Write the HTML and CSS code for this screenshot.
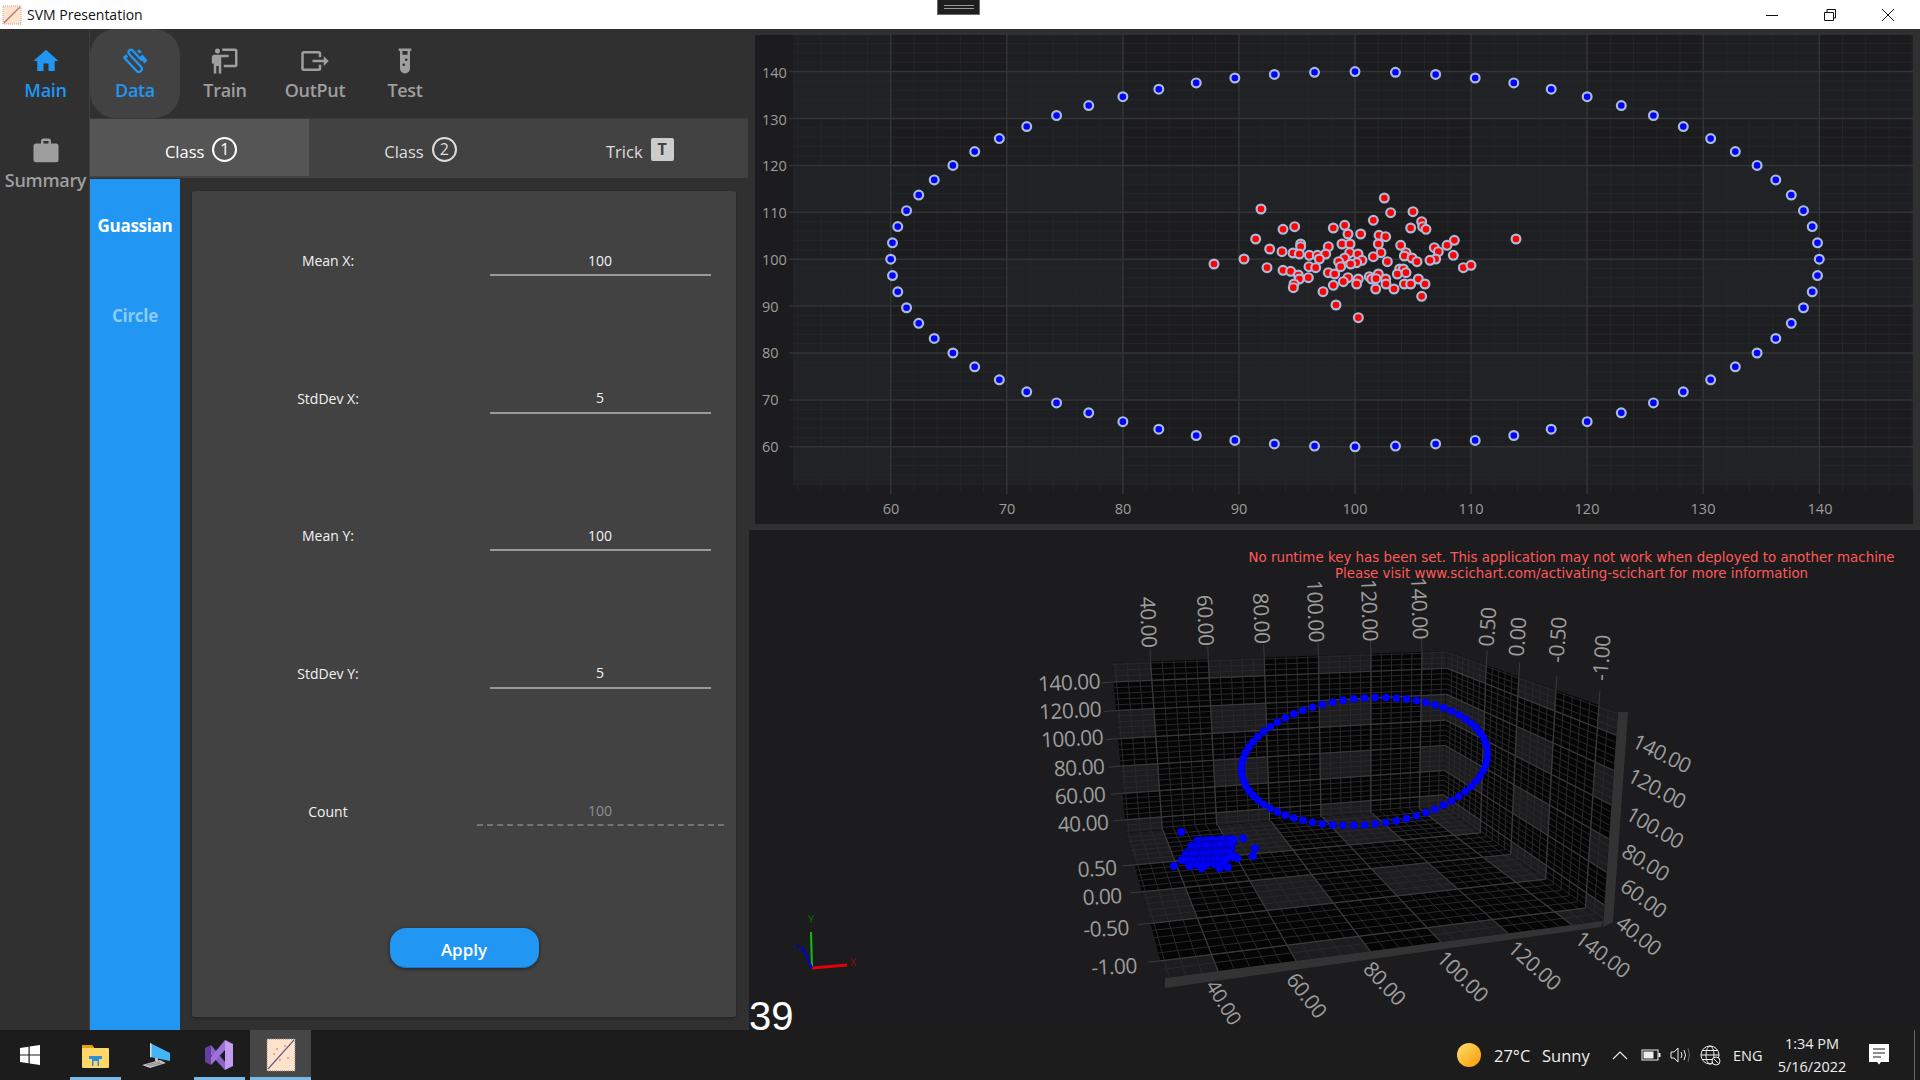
FILE: index.html
```html
<!DOCTYPE html>
<html lang="en">
<head>
<meta charset="utf-8">
<title>SVM Presentation</title>
<link rel="stylesheet" href="styles.css">
</head>
<body>
<div class="window">
  <header class="titlebar">
    <svg class="app-icon" viewBox="0 0 20 20"><rect x="1" y="1" width="18" height="18" fill="#fde3cc" stroke="#aaa" stroke-dasharray="1 1"/><path d="M2 18L18 2" stroke="#c9806a" stroke-width="1.2"/><path d="M2 17L17 3" stroke="#8a7a90" stroke-width=".6"/></svg>
    <span class="title-text">SVM Presentation</span>
    <div class="handle"><i></i><i></i></div>
    <div class="win-btns">
      <svg width="14" height="14" viewBox="0 0 14 14"><path d="M1 7.5H13" stroke="#111" stroke-width="1"/></svg>
      <svg width="14" height="14" viewBox="0 0 14 14"><path d="M1.5 4.5H10.5V12.5H1.5ZM4 4.5V1.5H12.5V10H10.5" fill="none" stroke="#111" stroke-width="1"/></svg>
      <svg width="14" height="14" viewBox="0 0 14 14"><path d="M1 1L13 13M13 1L1 13" stroke="#111" stroke-width="1"/></svg>
    </div>
  </header>

  <div class="main">
    <section class="left">
      <nav class="rail">
        <div class="nav-item is-active">
          <svg class="nav-icon" viewBox="0 0 24 24"><path d="M10,20V14H14V20H19V12H22L12,3L2,12H5V20H10Z"/></svg>
          <span>Main</span>
        </div>
        <div class="nav-item">
          <svg class="nav-icon" viewBox="0 0 24 24"><path d="M10,2H14A2,2 0 0,1 16,4V6H20A2,2 0 0,1 22,8V19A2,2 0 0,1 20,21H4C2.89,21 2,20.1 2,19V8C2,6.89 2.89,6 4,6H8V4C8,2.89 8.89,2 10,2M14,6V4H10V6H14Z"/></svg>
          <span>Summary</span>
        </div>
      </nav>
      <div class="panel">
        <nav class="topnav">
          <div class="nav-item is-active is-selected">
            <svg class="nav-icon" viewBox="0 0 24 24"><g fill="none" stroke="#2196f3" stroke-width="1.800" stroke-linecap="round"><path d="M3.500 9.500L13.500 20.200A2.500 2.500 0 0 0 17 16.700L7 6A2 2 0 0 1 10 3.500L17 11"/></g><path d="M15.500 9L18 6.800L22 11.500L19.500 14ZM15 2.500L17.500 4.500L16 6.200L13.500 4.200Z" fill="#2196f3"/><path d="M2.500 8.500L5 6.500L6.500 8.500L4 10.500Z" fill="#2196f3"/></svg>
            <span>Data</span>
          </div>
          <div class="nav-item">
            <svg class="nav-icon" viewBox="0 0 24 24"><path d="M20,17A2,2 0 0,0 22,15V4A2,2 0 0,0 20,2H9.46C9.81,2.61 10,3.3 10,4H20V15H11V17M15,7V9H9V22H7V16H5V22H3V14H1.5V9A2,2 0 0,1 3.5,7H15M8,4A2,2 0 0,1 6,6A2,2 0 0,1 4,4A2,2 0 0,1 6,2A2,2 0 0,1 8,4Z"/></svg>
            <span>Train</span>
          </div>
          <div class="nav-item">
            <svg class="nav-icon" viewBox="0 0 24 24"><path d="M23,12L19,8V11H10V13H19V16M1,18V6C1,4.89 1.9,4 3,4H15A2,2 0 0,1 17,6V9H15V6H3V18H15V15H17V18A2,2 0 0,1 15,20H3A2,2 0 0,1 1,18Z"/></svg>
            <span>OutPut</span>
          </div>
          <div class="nav-item">
            <svg class="nav-icon" viewBox="0 0 24 24"><path d="M7,2V4H8V18A4,4 0 0,0 12,22A4,4 0 0,0 16,18V4H17V2H7M11,16C10.4,16 10,15.6 10,15C10,14.4 10.4,14 11,14C11.6,14 12,14.4 12,15C12,15.6 11.6,16 11,16M13,12C12.4,12 12,11.6 12,11C12,10.4 12.4,10 13,10C13.6,10 14,10.4 14,11C14,11.6 13.6,12 13,12M14,7H10V4H14V7Z"/></svg>
            <span>Test</span>
          </div>
        </nav>
        <div class="tabs">
          <div class="tab is-current">Class <span class="badge">1</span></div>
          <div class="tab">Class <span class="badge">2</span></div>
          <div class="tab">Trick <span class="badge-box">T</span></div>
        </div>
        <div class="body">
          <aside class="modes">
            <div class="mode is-on">Guassian</div>
            <div class="mode">Circle</div>
          </aside>
          <div class="card-wrap">
            <form class="card">
              <div class="row"><label>Mean X:</label><div class="field">100</div></div>
              <div class="row"><label>StdDev X:</label><div class="field">5</div></div>
              <div class="row"><label>Mean Y:</label><div class="field">100</div></div>
              <div class="row"><label>StdDev Y:</label><div class="field">5</div></div>
              <div class="row"><label>Count</label><div class="field is-disabled">100</div></div>
              <div class="actions"><button class="apply" type="button">Apply</button></div>
            </form>
          </div>
        </div>
      </div>
    </section>

    <section class="right">
      <div class="chart-top">
        <svg id="scatter" class="scatter" viewBox="755 35 1158 489" width="1158" height="489">
          <g id="scatter-layer"></g>
          <g class="axis-text">
            <text x="762" y="78">140</text><text x="762" y="125">130</text><text x="762" y="171">120</text><text x="762" y="218">110</text><text x="762" y="265">100</text><text x="762" y="312">90</text><text x="762" y="358">80</text><text x="762" y="405">70</text><text x="762" y="452">60</text>
          </g>
          <g class="axis-text is-center">
            <text x="891" y="514">60</text><text x="1007" y="514">70</text><text x="1123" y="514">80</text><text x="1239" y="514">90</text><text x="1355" y="514">100</text><text x="1471" y="514">110</text><text x="1587" y="514">120</text><text x="1703" y="514">130</text><text x="1820" y="514">140</text>
          </g>
        </svg>
      </div>
      <div class="chart-bottom">
        <svg id="plot3d" class="plot3d" viewBox="749 530 1171 500" width="1171" height="500">
          <g id="plot-layer"></g>
          <g class="tick3d">
            <text transform="translate(1149 622) rotate(88)">40.00</text>
            <text transform="translate(1206 620) rotate(88)">60.00</text>
            <text transform="translate(1262 618) rotate(88)">80.00</text>
            <text transform="translate(1316 611) rotate(88)">100.00</text>
            <text transform="translate(1370 610) rotate(88)">120.00</text>
            <text transform="translate(1420 608) rotate(88)">140.00</text>
            <text transform="translate(1487 627) rotate(-86)">0.50</text>
            <text transform="translate(1517 637) rotate(-86)">0.00</text>
            <text transform="translate(1557 640) rotate(-86)">-0.50</text>
            <text transform="translate(1601 658) rotate(-86)">-1.00</text>
            <text transform="translate(1069 682) rotate(-3)">140.00</text>
            <text transform="translate(1070 710) rotate(-3)">120.00</text>
            <text transform="translate(1072 738) rotate(-3)">100.00</text>
            <text transform="translate(1079 767) rotate(-3)">80.00</text>
            <text transform="translate(1080 795) rotate(-3)">60.00</text>
            <text transform="translate(1083 823) rotate(-3)">40.00</text>
            <text transform="translate(1097 868) rotate(-3)">0.50</text>
            <text transform="translate(1102 896) rotate(-3)">0.00</text>
            <text transform="translate(1106 928) rotate(-3)">-0.50</text>
            <text transform="translate(1114 966) rotate(-3)">-1.00</text>
            <text transform="translate(1662 753) rotate(26)">140.00</text>
            <text transform="translate(1657 788) rotate(28)">120.00</text>
            <text transform="translate(1655 827) rotate(30)">100.00</text>
            <text transform="translate(1646 862) rotate(32)">80.00</text>
            <text transform="translate(1644 898) rotate(36)">60.00</text>
            <text transform="translate(1639 935) rotate(38)">40.00</text>
            <text class="tick-low" transform="translate(1224 1002) rotate(58)">40.00</text>
            <text transform="translate(1307 995) rotate(52)">60.00</text>
            <text transform="translate(1385 983) rotate(47)">80.00</text>
            <text transform="translate(1463 976) rotate(45)">100.00</text>
            <text transform="translate(1535 965) rotate(42)">120.00</text>
            <text transform="translate(1603 954) rotate(37)">140.00</text>
          </g>
          <path d="M812 968L811 932" stroke="#10c010" stroke-width="2"/>
          <path d="M812 968L847 965" stroke="#e00010" stroke-width="3"/>
          <path d="M812 968L803 948" stroke="#0000e0" stroke-width="2"/>
          <text class="gizmo gizmo-y" x="808" y="923">Y</text>
          <text class="gizmo gizmo-x" x="850" y="966">X</text>
          <text class="gizmo gizmo-z" transform="translate(802 952) rotate(-70)">Z</text>
        </svg>
        <p class="license">No runtime key has been set. This application may not work when deployed to another machine<br>Please visit www.scichart.com/activating-scichart for more information</p>
        <div class="fps">39</div>
      </div>
    </section>
  </div>

  <footer class="taskbar">
    <div class="tb-btn is-start">
      <svg width="22" height="22" viewBox="0 0 22 22"><path d="M1 4L9.5 2.7V10.4H1ZM10.7 2.5L21 1V10.4H10.7ZM1 11.6H9.5V19.3L1 18ZM10.7 11.6H21V21L10.7 19.5Z" fill="#fff"/></svg>
    </div>
    <div class="tb-btn is-open">
      <svg width="30" height="28" viewBox="0 0 30 28"><path d="M2 4H12L14 6V10H2Z" fill="#e0a010"/><rect x="2" y="7" width="27" height="20" rx="1" fill="#ffd768"/><path d="M9 15H22V18H19V25H12V18H9Z" fill="#2f8ed8"/><rect x="13.500" y="20" width="4" height="5" fill="#ffd768"/></svg>
    </div>
    <div class="tb-btn">
      <svg width="30" height="30" viewBox="0 0 30 30"><path d="M8 3L28 13V21L8 17Z" fill="#42b6f5"/><path d="M8 3L9.500 3.700V17.300L8 17Z" fill="#ddd"/><rect x="13" y="18" width="3" height="3" fill="#bbb"/><path d="M0 25L18 20L24 23L8 28Z" fill="#c4c4c4"/><path d="M4 25L18 22M7 26L20 23" stroke="#777" stroke-width=".7"/></svg>
    </div>
    <div class="tb-btn is-open">
      <svg width="30" height="34" viewBox="0 0 30 34"><path d="M7 7L21 24V32L7 17Z" fill="#8d62cc"/><path d="M21 2V12L7 27V19Z" fill="#9c72da"/><path d="M1 10L7 7V27L1 24Z" fill="#66409f"/><path d="M21 2L29 6V28L21 32Z" fill="#c39cf0"/></svg>
    </div>
    <div class="tb-btn is-open is-focus">
      <svg width="30" height="34" viewBox="0 0 30 34"><rect x="1" y="1" width="28" height="32" fill="#fde3cc" stroke="#888" stroke-dasharray="1 1"/><path d="M2 31L28 2" stroke="#6c5f86" stroke-width="1.2"/><g fill="#e88"><circle cx="8" cy="16" r="1"/><circle cx="14" cy="22" r="1"/><circle cx="19" cy="8" r="1"/><circle cx="22" cy="20" r="1"/><circle cx="11" cy="11" r="1"/></g></svg>
    </div>
    <div class="tray">
      <div class="weather">
        <span class="sun"></span>
        <span class="temp">27°C</span>
        <span class="cond">Sunny</span>
      </div>
      <svg class="tray-icon chev" width="16" height="10" viewBox="0 0 16 10"><path d="M1 9L8 2L15 9" fill="none" stroke="#eee" stroke-width="1.200"/></svg>
      <svg class="tray-icon batt" width="20" height="12" viewBox="0 0 20 12"><rect x="1" y="1" width="16" height="10" fill="none" stroke="#eee"/><rect x="2.500" y="2.500" width="10" height="7" fill="#eee"/><rect x="17.500" y="4" width="2" height="4" fill="#eee"/></svg>
      <svg class="tray-icon spk" width="21" height="16" viewBox="0 0 21 16"><path d="M1 5H4L8 1V15L4 11H1Z" fill="none" stroke="#eee"/><path d="M11 5Q13 8 11 11M14 3Q17 8 14 13" fill="none" stroke="#eee"/><path d="M18 1Q21 8 18 15" fill="none" stroke="#666"/></svg>
      <svg class="tray-icon globe" width="21" height="21" viewBox="0 0 21 21"><g fill="none" stroke="#eee"><circle cx="10" cy="10" r="9"/><ellipse cx="10" cy="10" rx="4" ry="9"/><path d="M1 10H19M2 5.500H18M2 14.500H18"/></g><circle cx="16" cy="16" r="4" fill="#1c1c1c" stroke="#eee"/><path d="M13.500 13.500L18.500 18.500" stroke="#eee"/></svg>
      <span class="lang">ENG</span>
      <div class="clock"><span>1:34 PM</span><span>5/16/2022</span></div>
      <svg class="tray-icon note" width="20" height="22" viewBox="0 0 20 22"><path d="M0 0H20V18H12L10 20.500L8 18H0Z" fill="#fff"/><path d="M4 5H16M4 9H16M4 13H12" stroke="#1c1c1c" stroke-width="1"/></svg>
      <i class="show-desktop"></i>
    </div>
  </footer>
</div>
<script src="chart.js"></script>
</body>
</html>
```
FILE: styles.css
```css
* { box-sizing: border-box; }
html, body { margin: 0; height: 100%; }
body { background: #303030; font-family: "Open Sans", "Liberation Sans", sans-serif; overflow: hidden; }
.window { width: 1920px; height: 1080px; display: flex; flex-direction: column; }

.titlebar { height: 29px; flex: none; background: #fff; display: flex; align-items: center; padding-left: 2px; position: relative; }
.app-icon { width: 20px; height: 20px; }
.title-text { margin-left: 5px; font-size: 14px; color: #111; }
.handle { position: absolute; left: 937px; top: 0; width: 43px; height: 15px; background: #1f1f1f; border: 1px solid #6a6a6a; border-top: 0; display: flex; flex-direction: column; align-items: center; justify-content: center; gap: 2px; }
.handle i { display: block; width: 30px; height: 1px; background: #999; }
.win-btns { margin-left: auto; display: flex; gap: 44px; padding-right: 25px; }

.main { flex: 1; display: flex; min-height: 0; }
.left { width: 749px; flex: none; display: flex; background: #303030; }
.rail { width: 90px; flex: none; border-right: 1px solid #3f3f3f; }
.panel { flex: 1; display: flex; flex-direction: column; min-width: 0; }

.nav-item { width: 90px; height: 89px; display: flex; flex-direction: column; align-items: center; padding-top: 17px; color: #9e9e9e; font-size: 18px; font-weight: 600; }
.rail .nav-item { width: 89px; margin-left: 1px; }
.nav-item span { line-height: 24px; margin-top: 2px; letter-spacing: -.3px; }
.nav-icon { width: 30px; height: 30px; fill: currentColor; flex: none; }
.rail .nav-item + .nav-item { padding-top: 18px; }
.nav-item.is-active { color: #2196f3; }
.nav-item.is-selected { background: #424242; border-radius: 26px; }
.topnav { display: flex; height: 89px; flex: none; }

.tabs { display: flex; height: 60px; flex: none; width: 658px; background: #424242; border-top: 1px solid #3a3a3a; margin-bottom: 1px; padding-bottom: 2px; }
.tab { flex: 1; display: flex; align-items: center; justify-content: center; gap: 8px; padding: 8px 0 0 3px; color: #ddd; font-size: 16.5px; font-weight: 500; }
.tab.is-current { background: #555; color: #fff; }
.badge { width: 25px; height: 25px; border: 2px solid currentColor; border-radius: 50%; display: flex; align-items: center; justify-content: center; font-size: 16px; line-height: 1; margin-top: -5px; }
.badge-box { width: 23px; height: 23px; background: #ccc; color: #424242; border-radius: 2px; display: flex; align-items: center; justify-content: center; font-size: 16px; font-weight: 700; margin-top: -5px; }

.body { flex: 1; display: flex; min-height: 0; }
.modes { width: 90px; flex: none; background: #2196f3; }
.mode { height: 90px; display: flex; align-items: center; justify-content: center; padding-top: 2px; font-size: 17px; font-weight: 700; color: #8ccbf8; letter-spacing: -.3px; }
.mode.is-on { color: #fff; }
.card-wrap { flex: 1; padding: 12px 13px 13px 12px; display: flex; }
.card { flex: 1; background: #424242; box-shadow: 0 1px 3px rgba(0,0,0,.35); border-radius: 2px; display: flex; flex-direction: column; }
.row { height: 137.6px; flex: none; display: grid; grid-template-columns: 1fr 1fr; align-items: center; padding-top: 2px; }
.row label { text-align: center; color: #f2f2f2; font-size: 14px; }
.field { justify-self: center; width: 221px; height: 30.4px; text-align: center; color: #f2f2f2; font-size: 14px; line-height: 29px; border-bottom: 2px solid #999; }
.field.is-disabled { width: 247px; color: #8e8e8e; border-bottom: 2px dashed #747474; }
.actions { display: flex; justify-content: center; padding-top: 49px; }
.apply { width: 149px; height: 40px; border: 0; border-bottom: 1px solid #1976d2; border-radius: 16px; background: #2196f3; color: #fff; font: 600 17px "Open Sans", "Liberation Sans", sans-serif; box-shadow: 0 1px 4px rgba(0,0,0,.5); padding: 4px 0 0; }

.right { flex: 1; min-width: 0; display: flex; flex-direction: column; background: #303030; }
.chart-top { height: 495px; flex: none; padding: 6px 7px 0 6px; }
.scatter { display: block; background: #1c1c1e; }
.axis-text text { font-size: 14.5px; fill: #9c9c9c; }
.axis-text.is-center text { text-anchor: middle; }
.chart-bottom { flex: 1; position: relative; background: #1c1c1e; margin-top: 6px; }
.plot3d { display: block; }
.tick3d text { font-size: 21px; fill: #9c9c9c; text-anchor: middle; dominant-baseline: central; letter-spacing: -.6px; }
.tick3d .tick-low { font-size: 20px; }
.gizmo { font-size: 11px; }
.gizmo-y { fill: #0b6a0b; }
.gizmo-x { fill: #8a1010; }
.gizmo-z { fill: #0000c0; }
.license { position: absolute; left: 490px; right: 16px; top: 20px; margin: 0; text-align: center; white-space: nowrap; color: #ff5a5a; font: 13.4px/16px "DejaVu Sans", sans-serif; }
.fps { position: absolute; left: 0; bottom: -9px; color: #fff; font: 40px/46px "Liberation Sans", sans-serif; }

.taskbar { height: 50px; flex: none; background: #1c1c1c; display: flex; align-items: center; color: #eee; position: relative; }
.tb-btn { width: 62px; height: 50px; flex: none; display: flex; align-items: center; justify-content: center; position: relative; }
.tb-btn.is-start { width: 64px; justify-content: flex-start; padding-left: 19px; }
.tb-btn.is-open::after { content: ""; position: absolute; left: 6px; right: 5px; bottom: 0; height: 3px; background: #76b9ed; }
.tb-btn.is-focus { background: #464646; width: 61px; }
.tb-btn.is-focus::after { left: 0; right: 0; }
.tray { margin-left: auto; display: flex; align-items: center; height: 50px; }
.weather { display: flex; align-items: center; }
.sun { width: 24px; height: 24px; border-radius: 50%; background: linear-gradient(135deg, #ffe070, #ff9800); }
.temp { margin-left: 13px; width: 37px; font-size: 16.5px; white-space: nowrap; }
.cond { margin-left: 11px; width: 49px; font-size: 16.5px; white-space: nowrap; }
.tray-icon { flex: none; }
.chev { margin-left: 21px; }
.batt { margin-left: 13px; }
.spk { margin-left: 9px; }
.globe { margin-left: 9px; }
.lang { margin-left: 12px; width: 29px; font-size: 14.5px; white-space: nowrap; }
.clock { margin-left: 12px; width: 76px; display: flex; flex-direction: column; align-items: center; font-size: 14.5px; line-height: 23px; }
.note { margin-left: 19px; }
.show-desktop { width: 1px; height: 50px; background: #666; margin-left: 25px; margin-right: 5px; }
```
FILE: chart.js
```js
(function () {
  var NS = 'http://www.w3.org/2000/svg';
  function el(parent, name, attrs) {
    var n = document.createElementNS(NS, name);
    for (var k in attrs) n.setAttribute(k, attrs[k]);
    parent.appendChild(n);
    return n;
  }

  /* ---------- 2D scatter ---------- */
  var L = document.getElementById('scatter-layer');
  function sx(v) { return 1355 + (v - 100) * 11.607; }
  function sy(v) { return 259.2 - (v - 100) * 4.69; }
  var PL = 793, PR = 1913, PT = 35, PB = 485;
  var i, v;
  for (v = 50; v < 150; v += 20) {
    var x0 = Math.max(sx(v), PL), x1 = Math.min(sx(v + 10), PR);
    el(L, 'rect', { x: x0, y: PT, width: x1 - x0, height: PB - PT, fill: '#8fb0c8', 'fill-opacity': .025 });
    var y0 = Math.max(sy(v + 10), PT), y1 = Math.min(sy(v), PB);
    el(L, 'rect', { x: PL, y: y0, width: PR - PL, height: y1 - y0, fill: '#8fb0c8', 'fill-opacity': .025 });
  }
  for (v = 52; v <= 148; v += 2) {
    if (v % 10 === 0) continue;
    var X = sx(v);
    if (X > PL) el(L, 'path', { d: 'M' + X + ' ' + PT + 'V491.500', stroke: '#252628', 'stroke-width': 1 });
    var Y = sy(v);
    if (Y > PT && Y < PB) el(L, 'path', { d: 'M' + PL + ' ' + Y + 'H' + PR, stroke: '#252628', 'stroke-width': 1 });
  }
  for (v = 60; v <= 140; v += 10) {
    el(L, 'path', { d: 'M' + sx(v) + ' ' + PT + 'V494', stroke: '#323335', 'stroke-width': 1.5 });
    el(L, 'path', { d: 'M789 ' + sy(v) + 'H' + PR, stroke: '#323335', 'stroke-width': 1.5 });
  }
  function dot(x, y, fill) {
    el(L, 'circle', { cx: x, cy: y, r: 4.4, fill: fill, stroke: '#aabbd8', 'stroke-width': 2.2 });
  }
  for (i = 0; i < 72; i++) {
    var t = i * Math.PI / 36;
    dot(sx(100 + 40 * Math.cos(t)), sy(100 + 40 * Math.sin(t)), '#0000ff');
  }
  var red = [[-48,282],[463,84],[93,117],[482,128],[549,125],[430,151],[575,155],[194,170],[159,178],[310,174],[344,166],[542,174],[578,170],[588,178],[354,192],[392,192],[447,196],[467,200],[77,207],[858,207],[673,211],[651,226],[212,222],[212,230],[295,230],[336,222],[360,222],[445,222],[512,226],[613,233],[119,237],[156,245],[189,249],[208,252],[238,256],[262,256],[287,252],[359,248],[384,252],[453,248],[528,248],[625,245],[523,258],[670,256],[430,260],[344,264],[268,267],[546,264],[617,267],[600,271],[396,271],[472,275],[561,275],[326,275],[380,278],[362,282],[42,267],[111,293],[237,290],[257,293],[332,290],[700,293],[723,286],[159,301],[182,304],[295,308],[314,312],[205,315],[509,297],[520,297],[502,312],[528,308],[445,312],[235,323],[208,327],[354,323],[385,327],[418,320],[425,327],[438,326],[467,327],[565,327],[340,335],[380,342],[310,346],[192,342],[190,353],[468,342],[523,342],[542,342],[585,342],[437,357],[492,357],[279,365],[575,379],[318,405],[385,443]];
  red.forEach(function (p) { dot(1230 + p[0] / 3, 170 + p[1] / 3, '#ff0000'); });

  /* ---------- 3D scene ---------- */
  var G = document.getElementById('plot-layer');
  function homography(q) {
    var x0 = q[0][0], y0 = q[0][1], x1 = q[1][0], y1 = q[1][1], x2 = q[2][0], y2 = q[2][1], x3 = q[3][0], y3 = q[3][1];
    var dx1 = x1 - x2, dx2 = x3 - x2, sx_ = x0 - x1 + x2 - x3;
    var dy1 = y1 - y2, dy2 = y3 - y2, sy_ = y0 - y1 + y2 - y3;
    var den = dx1 * dy2 - dx2 * dy1;
    var g = (sx_ * dy2 - dx2 * sy_) / den, h = (dx1 * sy_ - sx_ * dy1) / den;
    var a = x1 - x0 + g * x1, b = x3 - x0 + h * x3, d = y1 - y0 + g * y1, e = y3 - y0 + h * y3;
    return function (u, w) {
      var m = g * u + h * w + 1;
      return [(a * u + b * w + x0) / m, (d * u + e * w + y0) / m];
    };
  }
  var A = [1112, 663], B = [1126, 833], C = [1447, 651], D = [1443, 807], E = [1618, 712], F = [1603, 921], H = [1165, 978];

  var xU = function (x) { return (x - 27) / 123; };
  var yV = function (y) { return (153 - y) / 123; };
  var zU = function (z) { return (1.2 - z) / 2.4; };
  var seq = function (from, to, step) { var r = []; for (var q = from; q <= to + 1e-9; q += step) r.push(q); return r; };

  var xMajor = [0].concat([40, 60, 80, 100, 120, 140].map(xU), [1]);
  var yMajor = [0].concat([140, 120, 100, 80, 60, 40].map(yV), [1]);
  var zMajor = [0].concat([.5, 0, -.5, -1].map(zU), [1]);
  var xMinor = seq(28, 148, 4).map(xU);
  var yMinor = seq(32, 152, 4).map(yV);
  var zMinor = seq(-1.1, 1.1, .1).map(zU);

  function pts(f, list) { return list.map(function (p) { var r = f(p[0], p[1]); return r[0].toFixed(1) + ',' + r[1].toFixed(1); }).join(' '); }
  function wall(q, uMajor, vMajor, uMinor, vMinor) {
    var f = homography(q);
    el(G, 'polygon', { points: pts(f, [[0, 0], [1, 0], [1, 1], [0, 1]]), fill: '#050505' });
    for (var a = 0; a < uMajor.length - 1; a += 2) {
      for (var b = 0; b < vMajor.length - 1; b += 2) {
        el(G, 'polygon', { points: pts(f, [[uMajor[a], vMajor[b]], [uMajor[a + 1], vMajor[b]], [uMajor[a + 1], vMajor[b + 1]], [uMajor[a], vMajor[b + 1]]]), fill: '#1d1d1f' });
      }
    }
    function line(u0, w0, u1, w1, c, sw) {
      var p = f(u0, w0), r = f(u1, w1);
      el(G, 'line', { x1: p[0], y1: p[1], x2: r[0], y2: r[1], stroke: c, 'stroke-width': sw });
    }
    uMinor.forEach(function (u) { line(u, 0, u, 1, '#29292b', 1); });
    vMinor.forEach(function (w) { line(0, w, 1, w, '#29292b', 1); });
    uMajor.slice(1, -1).forEach(function (u) { line(u, 0, u, 1, '#3a3a3c', 1.2); });
    vMajor.slice(1, -1).forEach(function (w) { line(0, w, 1, w, '#3a3a3c', 1.2); });
    return f;
  }
  var fBack = wall([A, C, D, B], xMajor, yMajor, xMinor, yMinor);
  var fSide = wall([C, E, F, D], zMajor, yMajor, zMinor, yMinor);
  var fFloor = wall([B, D, F, H], xMajor, zMajor, xMinor, zMinor);

  /* outward ticks on the back wall and the floor edge */
  [40, 60, 80, 100, 120, 140].forEach(function (x) {
    var p = fBack(xU(x), 0);
    el(G, 'line', { x1: p[0], y1: p[1], x2: p[0] - .5, y2: p[1] - 13, stroke: '#3a3a3c' });
    var y = fBack(0, yV(x));
    el(G, 'line', { x1: y[0], y1: y[1], x2: y[0] - 12, y2: y[1] + 1, stroke: '#3a3a3c' });
  });
  [.5, 0, -.5, -1].forEach(function (z) {
    var p = fSide(zU(z), 0);
    el(G, 'line', { x1: p[0], y1: p[1], x2: p[0] + 1, y2: p[1] - 14, stroke: '#3a3a3c' });
    var y = fFloor(0, zU(z));
    el(G, 'line', { x1: y[0], y1: y[1], x2: y[0] - 12, y2: y[1] + 1, stroke: '#3a3a3c' });
  });

  /* thick front edges */
  el(G, 'polygon', { points: '1165,978 1603,921 1601,927 1165,988', fill: '#333334' });
  el(G, 'polygon', { points: '1618,712 1628,712 1613,922 1603,927', fill: '#333334' });

  function ball(x, y, r, edge) {
    el(G, 'circle', { cx: x, cy: y, r: r, fill: '#0000ff', stroke: edge, 'stroke-width': .8 });
  }
  /* ring of 72 points */
  for (i = 0; i < 72; i++) {
    var a3 = i * Math.PI / 36;
    var ca = Math.cos(a3), sa = Math.sin(a3);
    ball(1364.5 + 123 * ca, 761.5 - 7.8 * ca - 63.5 * sa, 3.6, '#0000e8');
  }
  /* cluster: a sheared lattice plus the outliers around it */
  for (var r = 0; r < 9; r++) {
    var s = r / 8;
    var lx = 1192 - 8.5 * s, ly = 842 + 22 * s, rx = 1232 - 4 * s, ry = 840 + 22 * s;
    for (var c = 0; c < 10; c++) {
      if ((r === 0 || r === 8) && (c === 0 || c === 9)) continue;
      var k = c / 9;
      ball(lx + (rx - lx) * k + ((r * 7 + c * 3) % 5 - 2) * .7, ly + (ry - ly) * k + ((r * 3 + c * 5) % 5 - 2) * .7, 3.6, '#0000a0');
    }
  }
  [[94,156],[279,175],[72,258],[315,205],[309,228],[250,178],[262,235],[155,265],[208,265],[233,262],[118,258],[95,240],[250,228],[225,240]].forEach(function (p) {
    ball(1150 + p[0] / 3, 780 + p[1] / 3, 3.8, '#0000e8');
  });
})();
```
